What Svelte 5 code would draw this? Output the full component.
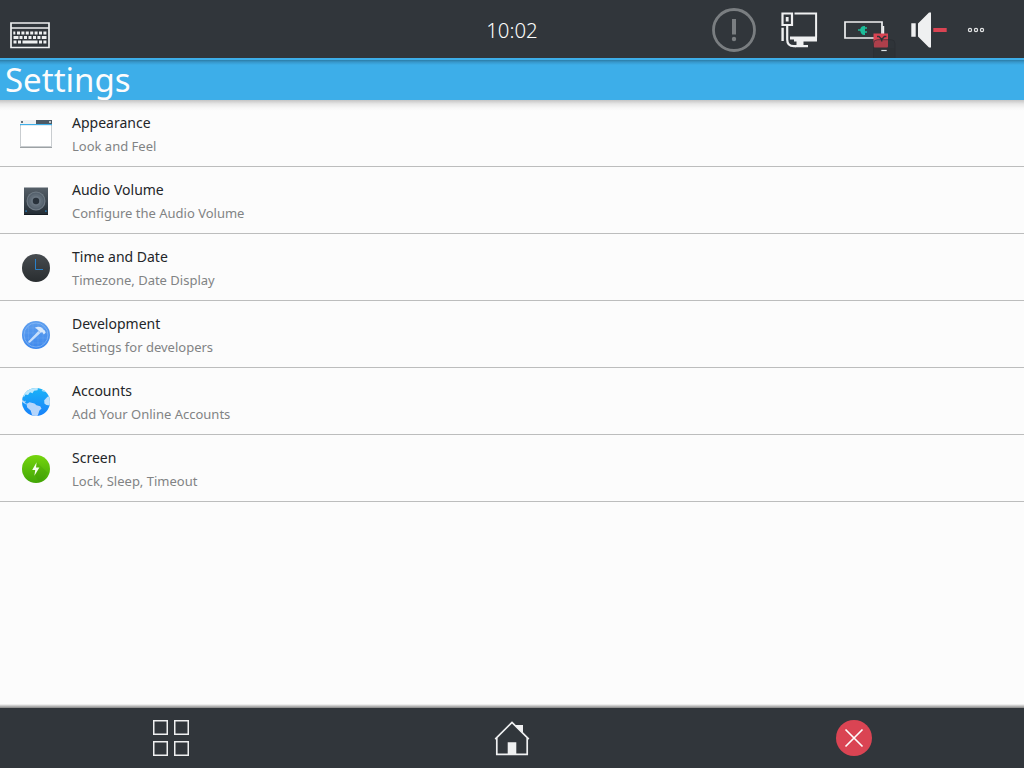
<script>
  const items = [
    { icon: 'appearance', title: 'Appearance', detail: 'Look and Feel' },
    { icon: 'audio', title: 'Audio Volume', detail: 'Configure the Audio Volume' },
    { icon: 'clock', title: 'Time and Date', detail: 'Timezone, Date Display' },
    { icon: 'development', title: 'Development', detail: 'Settings for developers' },
    { icon: 'accounts', title: 'Accounts', detail: 'Add Your Online Accounts' },
    { icon: 'screen', title: 'Screen', detail: 'Lock, Sleep, Timeout' }
  ];
</script>

<div class="device">
  <header class="panel">
    <div class="side">
      <svg class="keyboard" width="40" height="27" viewBox="0 0 40 27">
        <path d="M1 1h38v24.5H1zM1 6h38" fill="none" stroke="#eff0f1" stroke-width="1.7" />
        <g stroke="#eff0f1" stroke-width="3" fill="none">
          <path d="M3.3 11h2M7 11h3M11.4 11h3M15.8 11h3M20.2 11h3M24.6 11h3M29 11h3M33.4 11h3" />
          <path d="M3.5 15.5h5M9.5 15.5h3M14 15.5h3M18.5 15.5h3M23 15.5h3M27.4 15.5h3M31.8 15.5h4.7" />
          <path d="M3.5 20h3M8 20h3M12.5 20h15M29 20h3M33.4 20h3" />
        </g>
      </svg>
    </div>
    <time>10:02</time>
    <div class="side tray">
      <svg width="44" height="44" viewBox="0 0 44 44">
        <circle cx="22" cy="22" r="20.5" fill="none" stroke="#7a7e81" stroke-width="2.8" />
        <path d="M20 11h4v15.5h-4z" fill="#7a7e81" /><circle cx="22" cy="31" r="2.2" fill="#7a7e81" />
      </svg>
      <svg class="network" width="37" height="37" viewBox="0 0 37 37">
        <path d="M13.5 1.5h21.6v24" fill="none" stroke="#eff0f1" stroke-width="2" />
        <path d="M9 24.5h27v5H22.5v3.5H27v2.3H14V33h1.5v-3.5H13v-2H9z" fill="#eff0f1" />
        <path d="M1.5 1.5h9.5v11.5H1.5zM6.2 13.5v14q0 6.6 6.6 6.6h2" fill="none" stroke="#eff0f1" stroke-width="2.2" />
        <path d="M4.8 5h2.8v4.6H4.8zM.4 15.7h2.4v13.2H.4z" fill="#eff0f1" />
      </svg>
      <svg class="battery" width="52" height="40" viewBox="0 0 52 40">
        <path d="M1 2h37v16H1z" fill="none" stroke="#eff0f1" stroke-width="1.7" />
        <path d="M38.5 6h1.7v9h-1.7z" fill="#eff0f1" />
        <path d="M14 9.2h2.2q1-3.2 3.8-3.2h1v1.2h2v1.6h-2v2.4h2v1.6h-2V15h-1q-2.8 0-3.8-4.2H14z" fill="#1cbc99" />
        <path d="M29.5 13.5H44v13q0 1-1 1H31q-1.5 0-1.5-1.5z" fill="#da4453" />
        <path d="M33 16.5h2l2.7 3 2.7-3h2M37.7 19v2.5" fill="none" stroke="#30353a" stroke-width="1.5" />
        <path d="M29.5 27.5v-3.8q0-4 4-4H47q4 0 4 4V40H29.5z" fill="#2b2f33" fill-opacity=".25" stroke="#2a2d31" stroke-opacity=".65" />
        <path d="M30 28h20.5v12H30z" fill="#2b2f33" fill-opacity=".5" />
        <path d="M37.3 30.5h5.4" stroke="#dce2e5" stroke-width="1.2" />
      </svg>
      <svg class="volume" width="36" height="36" viewBox="0 0 36 36">
        <path d="M.3 11.3h4.4v13.4H.3zM7 11.5L18 .5h2v35h-2l-11-11z" fill="#eff0f1" />
        <path d="M22.3 16h13.4v4H22.3z" fill="#da4453" />
      </svg>
      <svg class="more" width="18" height="6" viewBox="0 0 18 6">
        <g fill="none" stroke="#e3e4e5" stroke-width="1.2"><circle cx="3" cy="3" r="1.6" /><circle cx="9" cy="3" r="1.6" /><circle cx="15" cy="3" r="1.6" /></g>
      </svg>
    </div>
  </header>

  <h1>Settings</h1>

  <main>
    {#each items as item}
      <div class="row">
        <svg width="32" height="32" viewBox="0 0 32 32">
          {#if item.icon === 'appearance'}
            <path d="M0 4h32v26H0z" fill="#c9cdd0" /><path d="M0 2h16v4H0z" fill="#eff0f1" /><path d="M16 2h16v4H16z" fill="#4d5a65" />
            <path d="M0 6h32v1.3H0z" fill="#3daee9" /><path d="M1 7.3h30V28H1z" fill="#fff" /><path d="M0 29h32v1H0z" fill="#9da2a5" />
            <path d="M1 3h2v2H1z" fill="#66717a" /><path d="M29 3h2v2h-2z" fill="#bdc3c7" />
          {:else if item.icon === 'audio'}
            <defs><linearGradient id="cabinet" x2="0" y2="1"><stop stop-color="#566069" /><stop offset="1" stop-color="#222b33" /></linearGradient></defs>
            <path d="M4 2.5h24V30H4z" fill="url(#cabinet)" /><path d="M4 29h24v1H4z" fill="#151d24" />
            <circle cx="16" cy="16" r="9.5" fill="#717c86" /><circle cx="16" cy="16" r="8.5" fill="#56626e" /><circle cx="16" cy="16" r="7" fill="#5f6b76" />
            <circle cx="16" cy="16" r="5" fill="#697580" /><circle cx="16" cy="16" r="3.2" fill="#29323b" />
            <path d="M5.3 25.3H7V27H5.3zM25 25.3h1.7V27H25z" fill="#286b9c" />
          {:else if item.icon === 'clock'}
            <defs><linearGradient id="dial" x2="0" y2="1"><stop stop-color="#474c50" /><stop offset="1" stop-color="#292d30" /></linearGradient></defs>
            <circle cx="16" cy="16" r="14" fill="url(#dial)" /><path d="M15.5 7v10.5H23" fill="none" stroke="#2980c9" stroke-width="1" />
          {:else if item.icon === 'development'}
            <defs><linearGradient id="blueprint" x2="0" y2="1"><stop stop-color="#5f9fee" /><stop offset="1" stop-color="#3d88ed" /></linearGradient></defs>
            <circle cx="16" cy="16" r="14" fill="url(#blueprint)" />
            <g fill="none" stroke="#9bc5fa" stroke-opacity=".25" stroke-width=".7"><circle cx="16" cy="16" r="12" stroke-opacity=".8" /><path d="M8.5 7v18M13 4.5v23M18 4.5v23M23 7v18M7 9h18M4.5 14h23M4.5 19h23M7 24h18" /></g>
            <path d="M8.3 22.5L18.3 12l2.1 2.1-10.2 9.4q-2.4.5-1.9-1z" fill="#c7dffb" /><path d="M14.8 8.8q4-2 7.5.2l.8 1.2 1.7 1.4.9 2-1.8 1.8-1.8-2.3-1.3.8-3.1-3.2q-.8-.9-2.9-1.9z" fill="#d8e9fd" />
          {:else if item.icon === 'accounts'}
            <defs><linearGradient id="ocean" x2="0" y2="1"><stop stop-color="#1ab7f8" /><stop offset="1" stop-color="#187dfa" /></linearGradient><clipPath id="globe"><circle cx="16" cy="16" r="14" /></clipPath></defs>
            <g clip-path="url(#globe)"><path d="M0 0h32v32H0z" fill="url(#ocean)" />
              <path d="M3 10l2-5 6-4 7 1-.5 2.2-3.5.5-1.5 2.5-2.5-1L8 9 5.5 8.5 4 11z" fill="#bce7fd" /><path d="M2 13.5l2.5 2 1.4-1L5 17l2.5 1-1.8.3L2 16z" fill="#b4d8fc" />
              <path d="M6.5 18l3-1.8 5 1.3 2 1.8 3.7 1 1.3 2.2-2.2 2.2-.9 3.1-1 2.4h-5l-1.7-5.6-3.5-3.2z" fill="#b5d5fb" /><path d="M31 9.7l-3.5 1-3.3 3.6.2 3.2 2 1.5 3.6.5 2-1z" fill="#bce0fd" /><path d="M20 1.5l3 1.5-1.4 2 3.8 1-1.5-3z" fill="#a9def9" />
            </g>
          {:else}
            <defs><linearGradient id="energy" x2="0" y2="1"><stop stop-color="#75d50d" /><stop offset="1" stop-color="#42a606" /></linearGradient></defs>
            <circle cx="16" cy="16" r="14" fill="url(#energy)" /><path d="M17 9.5l10.5 10Q24 27 19 29.2L15 22z" fill="#398e05" opacity=".22" /><path d="M16.6 9.3L12.2 17h3l-.8 5.8 5-8.3H16z" fill="#f6fff0" />
          {/if}
        </svg>
        <div class="text"><div class="title">{item.title}</div><div class="detail">{item.detail}</div></div>
      </div>
    {/each}
  </main>

  <nav>
    <div><svg width="36" height="36" viewBox="0 0 36 36"><path d="M.75.75h13.5v13.5H.75zM21.75.75h13.5v13.5h-13.5zM.75 21.75h13.5v13.5H.75zM21.75 21.75h13.5v13.5h-13.5z" fill="none" stroke="#eff0f1" stroke-width="1.5" /></svg></div>
    <div><svg width="36" height="36" viewBox="0 0 36 36"><path d="M1.2 19.2L18 2.4l16.8 16.8M2.8 17.7v16.7h30.4V17.7" fill="none" stroke="#eff0f1" stroke-width="1.7" /><path d="M22 5h7v8l-7-7zM13.7 22.2h8.6v12h-8.6z" fill="#eff0f1" /></svg></div>
    <div class="close"><svg width="36" height="36" viewBox="0 0 36 36"><circle cx="18" cy="18" r="18" fill="#da4453" /><path d="M9.5 9.5l17 17M26.5 9.5l-17 17" stroke="#fcfcfc" stroke-width="1.7" /></svg></div>
  </nav>
</div>

<style>
  :global(body) { margin: 0; }
  .device { width: 1024px; height: 768px; display: flex; flex-direction: column; overflow: hidden; background: #fcfcfc; color: #232629; font-family: "Noto Sans", sans-serif; }
  svg { display: block; flex: none; }
  .panel { height: 58px; flex: none; display: grid; grid-template-columns: 1fr auto 1fr; align-items: center; background: #31363b; }
  .side { display: flex; align-items: center; }
  .keyboard { margin: 12px 0 0 10px; }
  time { color: #fcfcfc; font-size: 20.4px; font-weight: 300; line-height: 28px; margin-top: 1px; }
  .tray { justify-content: flex-end; padding: 2px 39px 0 0; height: 58px; box-sizing: border-box; }
  .network { margin-left: 25px; }
  .battery { margin-left: 26px; margin-top: 20px; }
  .volume { margin-left: 15px; }
  .more { margin-left: 20px; }
  h1 { height: 42px; flex: none; box-sizing: border-box; margin: 0; padding-left: 5px; font-size: 33px; line-height: 43px; font-weight: 400; color: #fcfcfc; background: linear-gradient(#3daee9 0 2px, #2b7ca6 2px, #3797ca 4px, #3daee9 7px); }
  main { flex: 1; background: linear-gradient(#c4c4c4, #e7e7e7 4px, #f7f7f7 8px, #fcfcfc 11px, #fcfcfc calc(100% - 4px), #dedede calc(100% - 3px), #858585 100%); }
  .row { box-sizing: border-box; height: 67px; border-bottom: 1px solid #bcbdbd; display: flex; align-items: center; padding-left: 20px; gap: 20px; }
  .row > svg { margin-top: 2px; }
  .title { font-size: 14px; line-height: 20px; }
  .detail { margin-top: 4px; font-size: 13px; line-height: 18px; color: #818384; }
  .text { padding-top: 2px; }
  nav { height: 60px; flex: none; display: grid; grid-template-columns: repeat(3, 1fr); place-items: center; background: #31363b; }
  .close { padding-left: 2px; }
</style>
